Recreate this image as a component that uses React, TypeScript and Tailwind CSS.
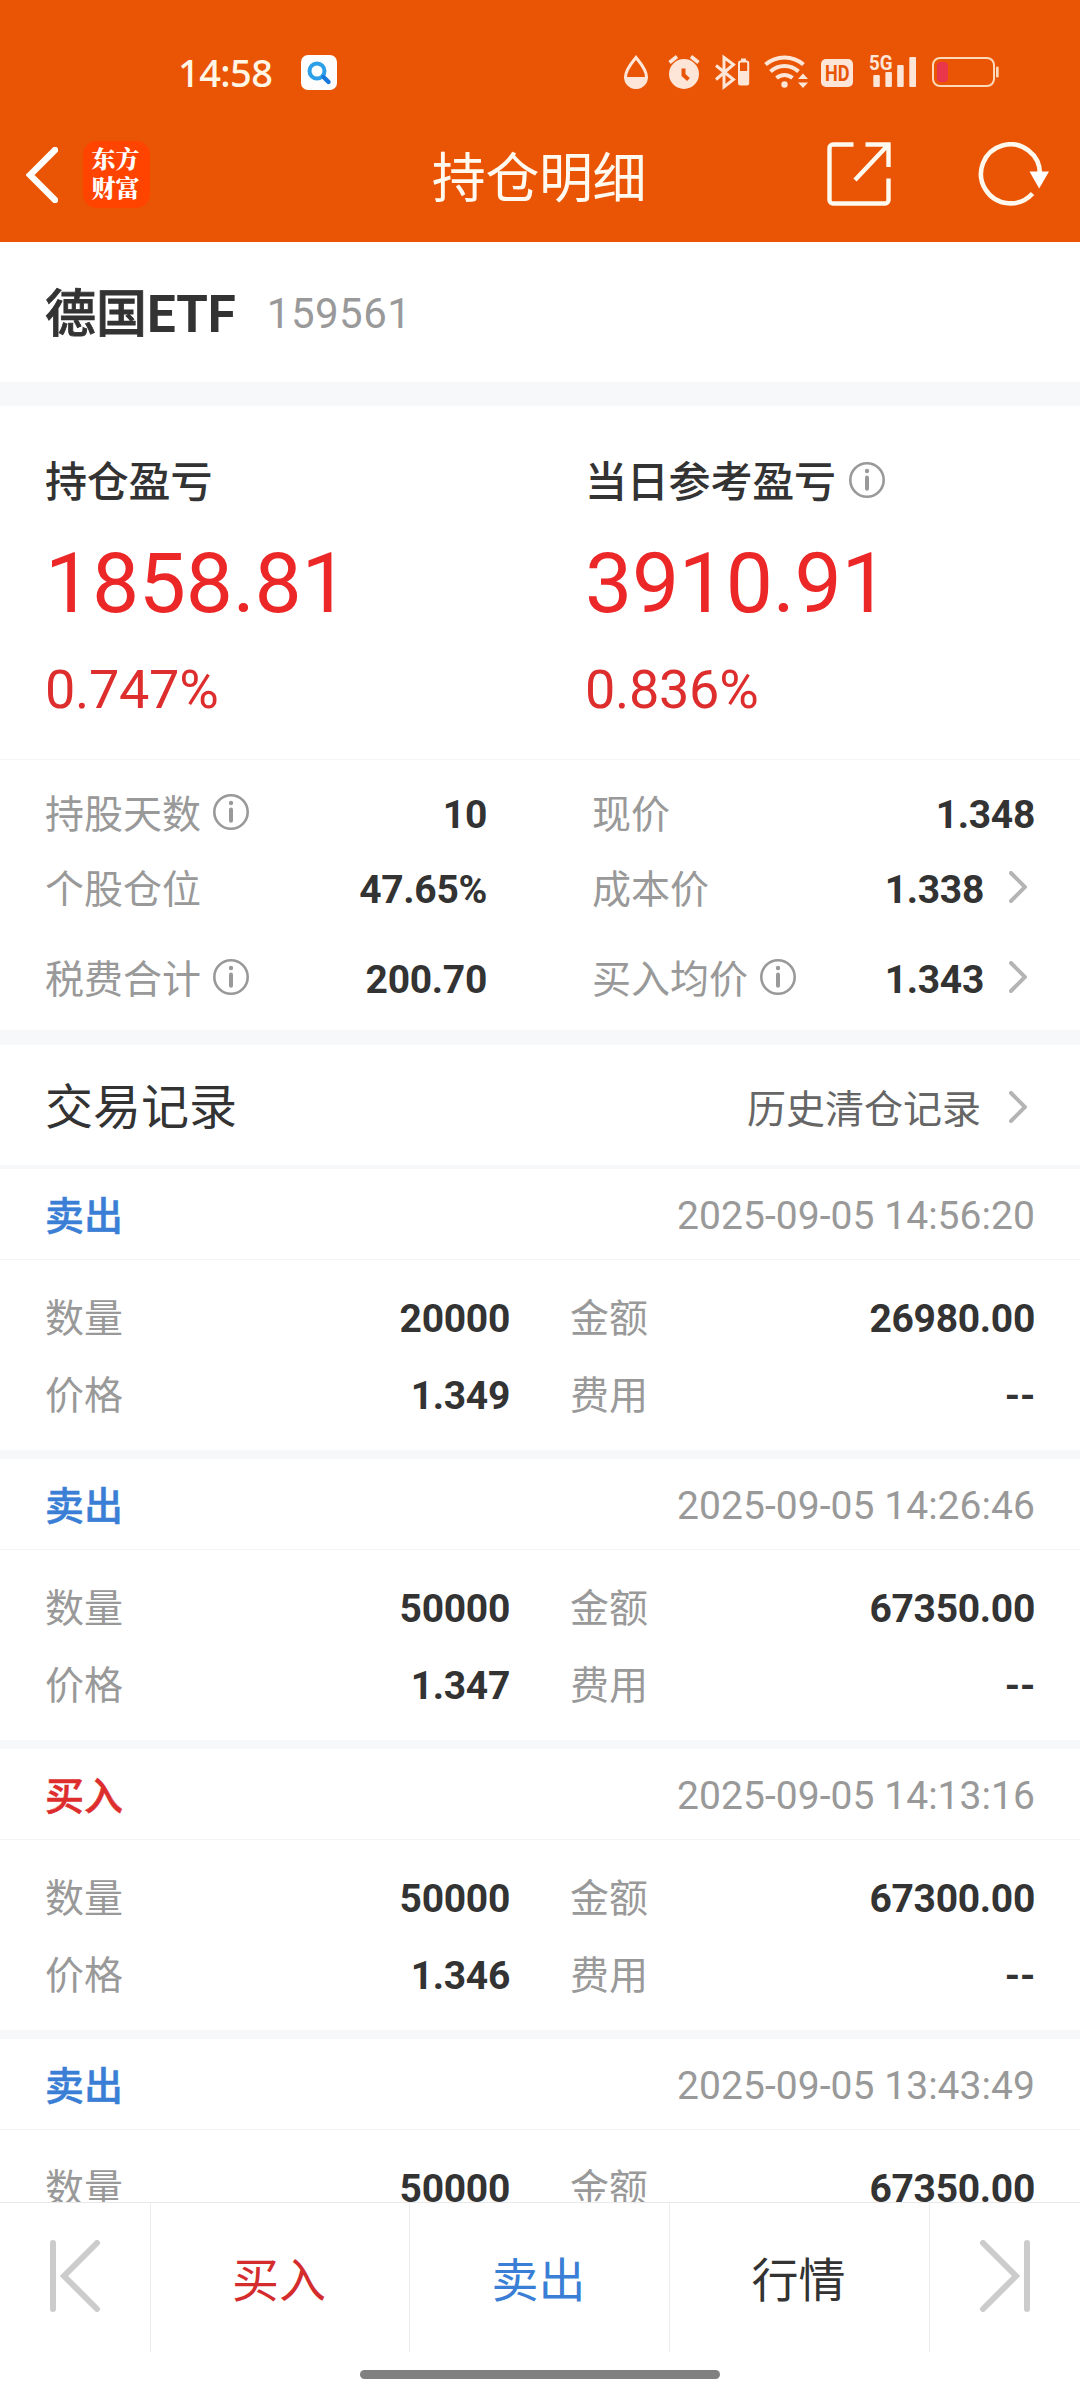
import React from "react";

type IconProps = { className?: string };

function InfoIcon({ className = "" }: IconProps) {
  return (
    <svg className={`size-9 shrink-0 ${className}`} viewBox="0 0 36 36" fill="none" stroke="#999999">
      <circle cx="18" cy="18" r="16.7" strokeWidth="2.6" />
      <circle cx="18" cy="9" r="2.2" fill="#999999" stroke="none" />
      <path d="M18 15.5V26.8" strokeWidth="4" strokeLinecap="round" />
    </svg>
  );
}

function ChevronRight({ className = "" }: IconProps) {
  return (
    <svg className={`h-8 w-[18px] shrink-0 ${className}`} viewBox="0 0 18 32" fill="none">
      <path d="M2 2L16 16L2 30" stroke="#b4b4b4" strokeWidth="4" strokeLinecap="round" />
    </svg>
  );
}

function StatusIcons() {
  return (
    <svg className="h-[38px] w-[376px] overflow-visible" viewBox="624 53 376 38" fill="#fde6d8">
      {/* water drop */}
      <path d="M636 57.5C640 62.5 646.5 69.5 646.5 77A10.5 10.5 0 0 1 625.5 77C625.5 69.5 632 62.5 636 57.5Z" fill="none" stroke="#fde6d8" strokeWidth="3" />
      <path d="M625 77H647A11 11.5 0 0 1 625 77Z" />
      {/* alarm */}
      <circle cx="684" cy="74" r="15" />
      <path d="M669.5 62.5L677 56.5M691 56.5L698.5 62.5" stroke="#fde6d8" strokeWidth="3.6" />
      <path d="M683.5 68.5V75L688.5 79.5" stroke="#e95504" strokeWidth="4" fill="none" />
      {/* bluetooth */}
      <path d="M716 65.5L733.5 79.5L724 87V57.5L733.5 64.5L716 79.5" stroke="#fde6d8" strokeWidth="3" fill="none" />
      <rect x="739" y="61.5" width="9.2" height="23" rx="1.5" stroke="#fde6d8" strokeWidth="2" fill="none" />
      <path d="M741 58.5H746V61H741ZM739.5 71H748V85H739.5Z" />
      {/* wifi */}
      <g fill="none" stroke="#fde6d8" strokeWidth="4">
        <path d="M765.5 64.5A29 29 0 0 1 803.5 64.5" />
        <path d="M770.5 71.5A20.5 20.5 0 0 1 798.5 71.5" />
        <path d="M776.5 78A12 12 0 0 1 792.5 78" />
      </g>
      <circle cx="784.5" cy="84.5" r="3.2" />
      <path d="M798 79L803 73.5L808 79ZM798 82.5L803 88L808 82.5Z" />
      {/* HD badge */}
      <rect x="821" y="59" width="32" height="28" rx="5" />
      <text x="825" y="81" fontFamily="Roboto" fontWeight="700" fontSize="22" textLength="24.5" lengthAdjust="spacingAndGlyphs" fill="#e95504">HD</text>
      {/* signal */}
      <text x="869" y="70" fontFamily="Roboto" fontWeight="700" fontSize="20.5" textLength="23.5" lengthAdjust="spacingAndGlyphs">5G</text>
      <rect x="873.3" y="75" width="6.5" height="12" rx="1" />
      <rect x="885.4" y="72" width="6.5" height="15" rx="1" />
      <rect x="897.2" y="65" width="6.5" height="22" rx="1" />
      <rect x="909.3" y="57" width="6.7" height="30" rx="1" />
      {/* battery */}
      <rect x="933" y="58" width="61" height="28" rx="7" fill="none" stroke="#fcd9b8" strokeWidth="2" />
      <rect x="996" y="66.5" width="2.7" height="11" rx="1.3" fill="#fcd9b8" />
      <rect x="937" y="62" width="11" height="20" rx="4" fill="#e9364a" />
    </svg>
  );
}

function Header() {
  return (
    <header className="flex h-[242px] shrink-0 flex-col bg-[#e95504] text-white">
      <div className="flex h-[106px] items-start justify-between pl-[178px] pr-20 pt-[53px]">
        <div className="flex items-center">
          <span className="w-[123px] font-['Noto_Sans'] text-[38px] font-medium leading-[38px] tracking-[-0.6px] text-[#fff6e6]">14:58</span>
          <svg className="h-[35px] w-9" viewBox="0 0 36 35">
            <rect width="36" height="35" rx="7" fill="#fdfdfd" />
            <circle cx="16" cy="16" r="7.5" fill="none" stroke="#2d9fe8" strokeWidth="4" />
            <path d="M22.5 22L27.5 27" stroke="#1678dc" strokeWidth="4.4" strokeLinecap="round" />
          </svg>
        </div>
        <StatusIcons />
      </div>
      <div className="grid h-[136px] grid-cols-[1fr_auto_1fr] items-center">
        <div className="flex items-center pl-[26px] pt-px">
          <svg className="h-14 w-8" viewBox="0 0 32 56" fill="none">
            <path d="M29 3L4 28L29 53" stroke="#fff" strokeWidth="6.5" strokeLinecap="round" />
          </svg>
          <div className="ml-[25px] flex size-[67px] flex-col items-center justify-center rounded-[14px] bg-[#ff4400] pb-[5px] pr-0.5 font-['Noto_Serif_CJK_SC','Noto_Sans_CJK_SC',sans-serif] text-[24px] font-black leading-[29px]">
            <span>东方</span>
            <span>财富</span>
          </div>
        </div>
        <h1 className="pr-0.5 pt-[11px] text-[54px] leading-[72px] tracking-[-0.4px] text-[#fff9ef]">持仓明细</h1>
        <div className="flex items-center justify-end pr-[30px]">
          <svg className="h-16 w-16" viewBox="0 0 64 64" fill="none" stroke="#fffaf0" strokeWidth="4.4">
            <path d="M26.5 2.5H6A3.5 3.5 0 0 0 2.5 6V58A3.5 3.5 0 0 0 6 61.5H58A3.5 3.5 0 0 0 61.5 58V36.5" />
            <path d="M38.5 2.5H61.5V25M61 3L28 38" />
          </svg>
          <svg className="ml-[87px] h-16 w-[72px]" viewBox="0 0 72 64" fill="none">
            <path d="M62 32A29.5 29.5 0 1 0 54.5 51.5" stroke="#fff8ec" strokeWidth="4.6" />
            <path d="M51.5 29.5H71L61.2 46.5Z" fill="#fff" />
          </svg>
        </div>
      </div>
    </header>
  );
}

function Profit({ label, amount, percent, info }: { label: string; amount: string; percent: string; info?: boolean }) {
  return (
    <div className="flex flex-col pl-[45px] pt-[45px]">
      <div className="flex h-[62px] items-center text-[42px] font-medium tracking-[-0.2px] text-[#333333]">
        {label}
        {info && <InfoIcon className="mb-1 ml-[13px]" />}
      </div>
      <div className="mt-[21px] text-[84px] leading-[100px] tracking-[-0.3px] text-[#ec2727]">{amount}</div>
      <div className="mt-[23px] text-[54px] leading-[66px] tracking-[-0.3px] text-[#dd2d2d]">{percent}</div>
    </div>
  );
}

function Stat({ label, value, info, link }: { label: string; value: string; info?: boolean; link?: boolean }) {
  return (
    <div className="flex items-center text-[39px] leading-[58px]">
      <span className="text-[#999999]">{label}</span>
      {info && <InfoIcon className="mb-1.5 ml-3" />}
      <span className="ml-auto font-bold tracking-[-0.3px] text-[#333333]">{value}</span>
      {link && <ChevronRight className="mb-1.5 ml-[25px] mr-2" />}
    </div>
  );
}

type Trade = { side: "买入" | "卖出"; time: string; qty: string; amount: string; price: string; fee: string };

const trades: Trade[] = [
  { side: "卖出", time: "2025-09-05 14:56:20", qty: "20000", amount: "26980.00", price: "1.349", fee: "--" },
  { side: "卖出", time: "2025-09-05 14:26:46", qty: "50000", amount: "67350.00", price: "1.347", fee: "--" },
  { side: "买入", time: "2025-09-05 14:13:16", qty: "50000", amount: "67300.00", price: "1.346", fee: "--" },
  { side: "卖出", time: "2025-09-05 13:43:49", qty: "50000", amount: "67350.00", price: "1.348", fee: "--" },
];

function TradeRecord({ trade }: { trade: Trade }) {
  return (
    <article className="shrink-0 border-b-[9px] border-[#f7f8fa] text-[39px]">
      <div className="flex h-[91px] items-center justify-between border-b border-[#f4f4f4] px-[45px] pt-1">
        <span
          className={
            trade.side === "买入"
              ? "pt-0.5 font-medium text-[#dd2d2d] [-webkit-text-stroke:0.5px_#dd2d2d]"
              : "pt-0.5 font-medium text-[#3a7fd5] [-webkit-text-stroke:0.5px_#3a7fd5]"
          }
        >
          {trade.side}
        </span>
        <span className="tracking-[0.05px] text-[#999999]">{trade.time}</span>
      </div>
      <div className="grid h-[190px] grid-cols-[465px_465px] content-start gap-x-[60px] gap-y-[19px] px-[45px] pt-[30px] leading-[58px]">
        <Stat label="数量" value={trade.qty} />
        <Stat label="金额" value={trade.amount} />
        <Stat label="价格" value={trade.price} />
        <Stat label="费用" value={trade.fee} />
      </div>
    </article>
  );
}

function BottomBar() {
  return (
    <footer className="flex h-[198px] shrink-0 flex-col border-t border-[#e8e8e8] bg-white">
      <nav className="grid h-[149px] grid-cols-[151px_259px_260px_260px_150px] divide-x divide-[#ececec] text-[47px]">
        <button className="flex items-center pl-[50px]">
          <svg className="mb-1 h-[72px] w-[51px]" viewBox="0 0 51 72" fill="none" stroke="#cccccc" strokeWidth="6" strokeLinecap="round">
            <path d="M3 3V69M47 3L14 36L47 69" />
          </svg>
        </button>
        <button className="pr-0.5 pt-[7px] text-[#d42c2c]">买入</button>
        <button className="pr-0.5 pt-[7px] text-[#3a7fd5]">卖出</button>
        <button className="pr-0.5 pt-[7px] text-[#333333]">行情</button>
        <button className="flex items-center pl-[49px]">
          <svg className="mb-1 h-[72px] w-[51px]" viewBox="0 0 51 72" fill="none" stroke="#cccccc" strokeWidth="6" strokeLinecap="round">
            <path d="M48 3V69M4 3L37 36L4 69" />
          </svg>
        </button>
      </nav>
      <div className="mx-auto mt-[18px] h-[9px] w-[360px] rounded-full bg-[#808080]" />
    </footer>
  );
}

export default function App() {
  return (
    <div className="flex h-[2400px] w-[1080px] flex-col overflow-hidden bg-white font-[Roboto,'Noto_Sans_CJK_SC',sans-serif]">
      <Header />
      <main className="flex min-h-0 flex-1 flex-col overflow-hidden">
        <section className="flex h-[140px] shrink-0 items-center px-[45px]">
          <div className="flex items-baseline pt-[7px] text-[51px] text-[#333333]">
            <span className="font-medium [-webkit-text-stroke:0.8px_#333333]">德国</span>
            <span className="font-bold">ETF</span>
          </div>
          <span className="ml-[31px] pt-0.5 text-[42px] tracking-[0.5px] text-[#999999]">159561</span>
        </section>
        <div className="h-6 shrink-0 bg-[#f6f8fa]" />
        <section className="grid h-[354px] shrink-0 grid-cols-2 border-b border-[#f5f5f5]">
          <Profit label="持仓盈亏" amount="1858.81" percent="0.747%" />
          <Profit label="当日参考盈亏" amount="3910.91" percent="0.836%" info />
        </section>
        <section className="grid h-[270px] shrink-0 grid-cols-[442px_443px] content-start gap-x-[105px] px-[45px] pt-[26px]">
          <Stat label="持股天数" value="10" info />
          <Stat label="现价" value="1.348" />
          <div className="pb-8 pt-[17px]">
            <Stat label="个股仓位" value="47.65%" />
          </div>
          <div className="pb-8 pt-[17px]">
            <Stat label="成本价" value="1.338" link />
          </div>
          <Stat label="税费合计" value="200.70" info />
          <Stat label="买入均价" value="1.343" info link />
        </section>
        <div className="h-[15px] shrink-0 bg-[#f6f8fa]" />
        <section className="flex h-[124px] shrink-0 items-center border-b-4 border-[#f7f8fa] pl-[45px] pr-[53px]">
          <h2 className="pt-1.5 text-[48px] text-[#333333]">交易记录</h2>
          <span className="ml-auto pt-[11px] text-[39px] text-[#666666]">历史清仓记录</span>
          <ChevronRight className="ml-7 mt-1" />
        </section>
        {trades.map((trade) => (
          <TradeRecord key={trade.time} trade={trade} />
        ))}
      </main>
      <BottomBar />
    </div>
  );
}
